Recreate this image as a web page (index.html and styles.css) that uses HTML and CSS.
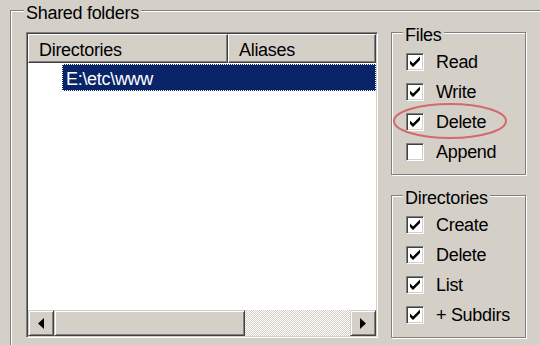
FILE: index.html
```html
<!DOCTYPE html>
<html>
<head>
<meta charset="utf-8">
<link rel="stylesheet" href="styles.css">
</head>
<body>
<div class="dialog">
  <div class="group outer">
    <div class="group-title">Shared folders</div>
    <div class="content">
      <div class="listview">
        <div class="lv-header">
          <div class="lv-col col-dir">Directories</div>
          <div class="lv-col col-alias">Aliases</div>
        </div>
        <div class="lv-body">
          <div class="lv-row selected"><span class="lv-cell">E:\etc\www</span></div>
        </div>
        <div class="hscroll">
          <div class="sb-btn"><svg width="6" height="11" viewBox="0 0 6 11"><polygon points="6,0 0,5.5 6,11" fill="#000"/></svg></div>
          <div class="sb-thumb"></div>
          <div class="sb-track"></div>
          <div class="sb-btn"><svg width="6" height="11" viewBox="0 0 6 11"><polygon points="0,0 6,5.5 0,11" fill="#000"/></svg></div>
        </div>
      </div>
      <div class="side">
        <div class="group perm files">
          <div class="group-title">Files</div>
          <div class="checks">
            <div class="check-item"><span class="checkbox"><svg width="14" height="14" viewBox="0 0 14 14"><polygon points="2,5.5 5,8.5 12,1.5 12,5 5,12 2,9" fill="#000"/></svg></span><span class="label">Read</span></div>
            <div class="check-item"><span class="checkbox"><svg width="14" height="14" viewBox="0 0 14 14"><polygon points="2,5.5 5,8.5 12,1.5 12,5 5,12 2,9" fill="#000"/></svg></span><span class="label">Write</span></div>
            <div class="check-item"><span class="checkbox"><svg width="14" height="14" viewBox="0 0 14 14"><polygon points="2,5.5 5,8.5 12,1.5 12,5 5,12 2,9" fill="#000"/></svg></span><span class="label">Delete</span></div>
            <div class="check-item"><span class="checkbox"></span><span class="label">Append</span></div>
          </div>
          <svg class="annotation" width="116" height="38" viewBox="0 0 116 38"><ellipse cx="58" cy="19" rx="56" ry="17" fill="none" stroke="#d26b6b" stroke-width="2"/></svg>
        </div>
        <div class="group perm">
          <div class="group-title">Directories</div>
          <div class="checks">
            <div class="check-item"><span class="checkbox"><svg width="14" height="14" viewBox="0 0 14 14"><polygon points="2,5.5 5,8.5 12,1.5 12,5 5,12 2,9" fill="#000"/></svg></span><span class="label">Create</span></div>
            <div class="check-item"><span class="checkbox"><svg width="14" height="14" viewBox="0 0 14 14"><polygon points="2,5.5 5,8.5 12,1.5 12,5 5,12 2,9" fill="#000"/></svg></span><span class="label">Delete</span></div>
            <div class="check-item"><span class="checkbox"><svg width="14" height="14" viewBox="0 0 14 14"><polygon points="2,5.5 5,8.5 12,1.5 12,5 5,12 2,9" fill="#000"/></svg></span><span class="label">List</span></div>
            <div class="check-item"><span class="checkbox"><svg width="14" height="14" viewBox="0 0 14 14"><polygon points="2,5.5 5,8.5 12,1.5 12,5 5,12 2,9" fill="#000"/></svg></span><span class="label">+ Subdirs</span></div>
          </div>
        </div>
      </div>
    </div>
  </div>
</div>
</body>
</html>
```

FILE: styles.css
```css
* { box-sizing: border-box; }
html, body {
  margin: 0;
  padding: 0;
  width: 540px;
  height: 345px;
  overflow: hidden;
  background: #d4d0c8;
}
body {
  font-family: "Liberation Sans", Arial, sans-serif;
  font-size: 18px;
  letter-spacing: -0.3px;
  color: #000;
}
.dialog {
  padding: 10px 0 0 10px;
}
.group {
  border: 1px solid #808080;
  box-shadow: inset 1px 1px 0 #fff, 1px 1px 0 #fff;
}
.group-title {
  width: fit-content;
  margin: -9px 0 0 11px;
  padding: 0 2px;
  line-height: 22px;
  height: 22px;
  background: #d4d0c8;
  white-space: nowrap;
}
.outer {
  width: 530px;
  height: 335px;
  border-right: 0;
  border-bottom: 0;
  box-shadow: inset 1px 1px 0 #fff;
}
.outer > .group-title {
  margin-left: 13px;
}
.content {
  display: flex;
  align-items: flex-start;
  gap: 13px;
  margin-top: 8px;
  padding-left: 15px;
}
.listview {
  width: 352px;
  height: 306px;
  display: flex;
  flex-direction: column;
  background: #fff;
  border-style: solid;
  border-width: 1px;
  border-color: #808080 #fff #fff #808080;
  box-shadow: inset 1px 1px 0 #404040, inset -1px -1px 0 #d4d0c8;
  padding: 1px;
}
.lv-header {
  display: flex;
  height: 29px;
  flex: none;
}
.lv-col {
  height: 29px;
  background: #d4d0c8;
  border-style: solid;
  border-width: 1px;
  border-color: #fff #404040 #404040 #fff;
  box-shadow: inset -1px -1px 0 #808080;
  padding: 4px 0 0 10px;
  line-height: 22px;
  white-space: nowrap;
}
.col-dir {
  width: 200px;
}
.col-alias {
  flex: 1;
}
.lv-body {
  flex: 1;
  padding-top: 1px;
}
.lv-row {
  height: 27px;
  margin-left: 34px;
}
.selected {
  background: #0a246a;
  color: #fff;
  border: 1px dotted #fff;
  padding: 3px 0 0 3px;
  line-height: 22px;
}
.hscroll {
  display: flex;
  height: 26px;
  flex: none;
}
.sb-btn, .sb-thumb {
  background: #d4d0c8;
  border-style: solid;
  border-width: 1px;
  border-color: #d4d0c8 #404040 #404040 #d4d0c8;
  box-shadow: inset 1px 1px 0 #fff, inset -1px -1px 0 #808080;
}
.sb-btn {
  width: 26px;
  display: flex;
  align-items: center;
  justify-content: center;
}
.sb-btn svg { display: block; }
.sb-thumb {
  width: 191px;
}
.sb-track {
  flex: 1;
  background-image: conic-gradient(#fff 25%, #d4d0c8 0 50%, #fff 0 75%, #d4d0c8 0);
  background-size: 2px 2px;
}
.side {
  display: flex;
  flex-direction: column;
  gap: 20px;
}
.perm {
  position: relative;
  width: 135px;
  height: 143px;
}
.checks {
  margin-top: 1px;
  padding-left: 14px;
}
.check-item {
  display: flex;
  align-items: center;
  gap: 12px;
  height: 30px;
  line-height: 22px;
}
.checkbox {
  width: 18px;
  height: 18px;
  flex: none;
  background: #fff;
  border-style: solid;
  border-width: 1px;
  border-color: #808080 #fff #fff #808080;
  box-shadow: inset 1px 1px 0 #404040, inset -1px -1px 0 #d4d0c8;
  padding: 1px;
}
.checkbox svg { display: block; }
.annotation {
  position: absolute;
  left: 0;
  top: 69px;
}
```
